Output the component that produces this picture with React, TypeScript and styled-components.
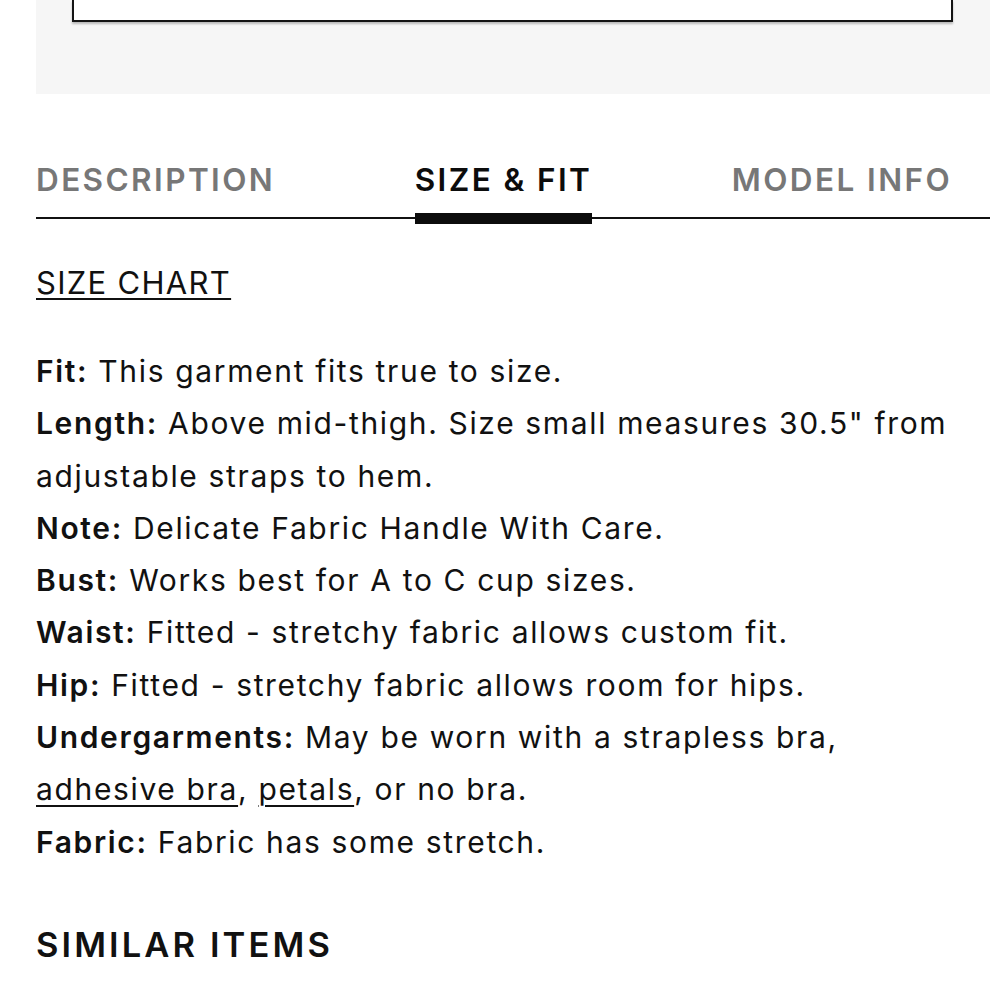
import React from 'react';
import styled, { createGlobalStyle } from 'styled-components';

const GlobalStyle = createGlobalStyle`
  body {
    margin: 0;
    background: #fff;
    font-family: Inter, "Noto Sans", sans-serif;
    color: #111;
  }
`;

const Page = styled.div`
  width: 954px;
  padding-left: 36px;
`;

const ActionPanel = styled.div`
  height: 94px;
  background: #f6f6f6;
  padding: 0 37px 0 36px;
`;

const OutlineButton = styled.div`
  height: 20px;
  background: #fff;
  border: 2px solid #141414;
  border-top: none;
  box-shadow: 0 2px 2px rgba(0, 0, 0, 0.25);
`;

const TabBar = styled.div`
  display: flex;
  justify-content: space-between;
  padding-right: 38px;
  margin-top: 66px;
  border-bottom: 2px solid #111;
`;

const Tab = styled.div<{ $active?: boolean }>`
  position: relative;
  font-size: 31.5px;
  font-weight: 600;
  letter-spacing: 2.4px;
  line-height: 40px;
  padding-bottom: 17px;
  color: ${p => (p.$active ? '#0c0c0c' : '#777')};

  &::after {
    content: '';
    display: ${p => (p.$active ? 'block' : 'none')};
    position: absolute;
    left: 0;
    right: 0;
    bottom: -7px;
    height: 11px;
    background: #0c0c0c;
  }
`;

const ChartLink = styled.a`
  display: inline-block;
  margin-top: 45px;
  font-size: 31px;
  letter-spacing: 1.3px;
  color: #111;
  text-decoration: underline;
  text-underline-offset: 4px;
  text-decoration-thickness: 2px;
`;

const Details = styled.div`
  margin-top: 44px;
  font-size: 30px;
  line-height: 52.3px;
  letter-spacing: 1.65px;
  padding-right: 30px;
`;

const Line = styled.div``;

const Label = styled.b`
  font-weight: 600;
`;

const InlineLink = styled.a`
  color: #111;
  text-decoration: underline;
  text-underline-offset: 5px;
  text-decoration-thickness: 2px;
`;

const SectionTitle = styled.h2`
  margin: 52px 0 0;
  font-size: 34.5px;
  font-weight: 600;
  letter-spacing: 3.1px;
  line-height: 50px;
`;

const fitRows: { label: string; text: React.ReactNode }[] = [
  { label: 'Fit:', text: 'This garment fits true to size.' },
  { label: 'Length:', text: 'Above mid-thigh. Size small measures 30.5" from adjustable straps to hem.' },
  { label: 'Note:', text: 'Delicate Fabric Handle With Care.' },
  { label: 'Bust:', text: 'Works best for A to C cup sizes.' },
  { label: 'Waist:', text: 'Fitted - stretchy fabric allows custom fit.' },
  { label: 'Hip:', text: 'Fitted - stretchy fabric allows room for hips.' },
  {
    label: 'Undergarments:',
    text: (
      <>
        May be worn with a strapless bra, <InlineLink href="#">adhesive bra</InlineLink>,{' '}
        <InlineLink href="#">petals</InlineLink>, or no bra.
      </>
    ),
  },
  { label: 'Fabric:', text: 'Fabric has some stretch.' },
];

export default function App() {
  return (
    <>
      <GlobalStyle />
      <Page>
        <ActionPanel>
          <OutlineButton />
        </ActionPanel>

        <TabBar>
          <Tab>DESCRIPTION</Tab>
          <Tab $active>SIZE &amp; FIT</Tab>
          <Tab>MODEL INFO</Tab>
        </TabBar>

        <ChartLink href="#">SIZE CHART</ChartLink>

        <Details>
          {fitRows.map(row => (
            <Line key={row.label}>
              <Label>{row.label}</Label> {row.text}
            </Line>
          ))}
        </Details>

        <SectionTitle>SIMILAR ITEMS</SectionTitle>
      </Page>
    </>
  );
}
